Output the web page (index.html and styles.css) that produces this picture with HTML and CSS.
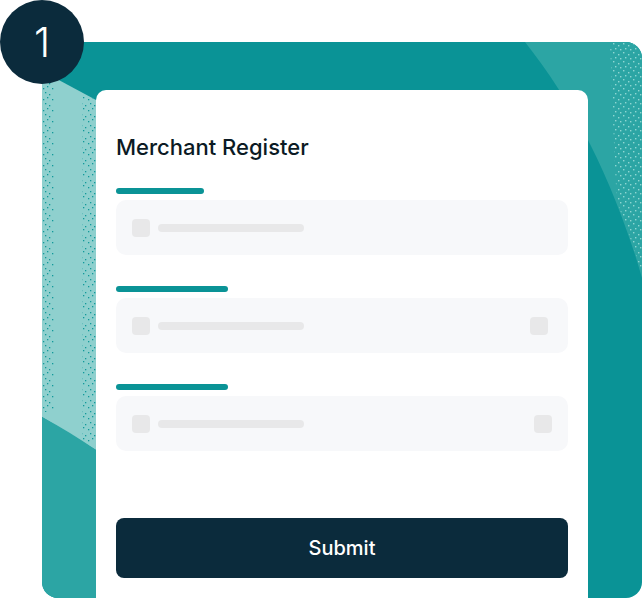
FILE: index.html
```html
<!DOCTYPE html>
<html lang="en">

<head>
    <meta charset="UTF-8">
    <meta name="viewport" content="width=device-width, initial-scale=1.0">
    <title>Merchant Register</title>
    <link rel="stylesheet" href="styles.css">
</head>

<body>
    <div class="stage">
        <div class="badge">1</div>

        <div class="panel">
            <svg class="panel-art" width="600" height="556" viewBox="0 0 600 556">
                <defs>
                    <pattern id="dotsDark" width="9" height="11" patternUnits="userSpaceOnUse">
                        <rect x="1" y="2" width="1.3" height="1.3" fill="#12999a"/>
                        <rect x="5" y="0" width="1.3" height="1.3" fill="#12999a"/>
                        <rect x="3" y="6" width="1.3" height="1.3" fill="#12999a"/>
                        <rect x="7" y="8" width="1.3" height="1.3" fill="#12999a"/>
                    </pattern>
                    <pattern id="dotsLight" width="10" height="9" patternUnits="userSpaceOnUse">
                        <rect x="1" y="1" width="1.4" height="1.4" fill="#8fd6d2"/>
                        <rect x="6" y="3" width="1.4" height="1.4" fill="#8fd6d2"/>
                        <rect x="3" y="6" width="1.4" height="1.4" fill="#8fd6d2"/>
                        <rect x="8" y="7" width="1.4" height="1.4" fill="#8fd6d2"/>
                    </pattern>
                </defs>
                <!-- left stripe -->
                <polygon points="0,29 54,58 54,408 0,375" fill="#8fd0ce"/>
                <path d="M0 375 Q28 390 54 408 L54 556 L0 556 Z" fill="#2ca5a4"/>
                <rect x="0" y="40" width="12" height="330" fill="url(#dotsDark)"/>
                <rect x="40" y="55" width="14" height="345" fill="url(#dotsDark)"/>
                <!-- right wave -->
                <path d="M483 0 C505 28 530 65 548 102 C570 145 590 200 600 236 L600 0 Z" fill="#2ca5a4"/>
                <path d="M568 0 L600 0 L600 232 C593 210 585 185 575 160 C572 110 570 50 568 0 Z" fill="url(#dotsLight)"/>
            </svg>

            <form class="card">
                <h2 class="title">Merchant Register</h2>

                <div class="fields">
                    <div class="field-group">
                        <span class="label-bar"></span>
                        <div class="field">
                            <span class="icon"></span>
                            <span class="line"></span>
                        </div>
                    </div>
                    <div class="field-group">
                        <span class="label-bar long"></span>
                        <div class="field wide-end">
                            <span class="icon"></span>
                            <span class="line"></span>
                            <span class="icon end"></span>
                        </div>
                    </div>
                    <div class="field-group">
                        <span class="label-bar long"></span>
                        <div class="field">
                            <span class="icon"></span>
                            <span class="line"></span>
                            <span class="icon end"></span>
                        </div>
                    </div>
                </div>

                <button type="button" class="submit">Submit</button>
            </form>
        </div>
    </div>
</body>

</html>
```

FILE: styles.css
```css
body {
    font-family: 'Inter', 'Noto Sans', sans-serif;
    margin: 0;
    padding: 0;
    background-color: #fff;
}

.stage {
    position: relative;
    width: 642px;
    height: 598px;
    overflow: hidden;
}

.badge {
    position: absolute;
    top: 0;
    left: 0;
    z-index: 2;
    width: 84px;
    height: 84px;
    border-radius: 50%;
    background-color: #0b2b3c;
    color: #fff;
    font-size: 41px;
    font-weight: 300;
    display: flex;
    align-items: center;
    justify-content: center;
}

.panel {
    position: relative;
    margin: 42px 0 0 42px;
    width: 600px;
    height: 556px;
    padding: 48px 0 0 54px;
    box-sizing: border-box;
    background-color: #0a9396;
    border-radius: 16px;
    overflow: hidden;
}

.panel-art {
    position: absolute;
    top: 0;
    left: 0;
}

.card {
    position: relative;
    width: 492px;
    height: 508px;
    padding: 43px 20px 0;
    box-sizing: border-box;
    background-color: #fff;
    border-radius: 10px 10px 0 0;
}

.title {
    margin: 0;
    font-size: 22px;
    line-height: 28px;
    font-weight: 500;
    color: #0b1a24;
}

.fields {
    margin-top: 27px;
    display: flex;
    flex-direction: column;
    gap: 31px;
}

.field-group {
    display: flex;
    flex-direction: column;
    gap: 6px;
}

.label-bar {
    display: block;
    width: 88px;
    height: 6px;
    border-radius: 3px;
    background-color: #0a9396;
}

.label-bar.long {
    width: 112px;
}

.field {
    height: 55px;
    padding: 0 16px;
    box-sizing: border-box;
    display: flex;
    align-items: center;
    gap: 8px;
    background-color: #f7f8fa;
    border-radius: 10px;
}

.field.wide-end {
    padding-right: 20px;
}

.icon {
    width: 18px;
    height: 18px;
    border-radius: 4px;
    background-color: #e8e8e9;
}

.icon.end {
    margin-left: auto;
}

.line {
    width: 146px;
    height: 8px;
    border-radius: 4px;
    background-color: #e8e8e9;
}

.submit {
    margin-top: 67px;
    width: 100%;
    height: 60px;
    border: none;
    border-radius: 8px;
    background-color: #0b2b3c;
    color: #fff;
    font-family: 'Inter', 'Noto Sans', sans-serif;
    font-size: 20px;
    font-weight: 500;
    cursor: pointer;
}
```
